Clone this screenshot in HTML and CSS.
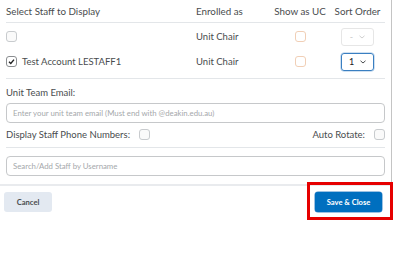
FILE: index.html
```html
<!DOCTYPE html>
<html>
<head>
<meta charset="utf-8">
<link rel="stylesheet" href="styles.css">
</head>
<body>
<div class="panel">
  <div class="grid head">
    <div>Select Staff to Display</div>
    <div>Enrolled as</div>
    <div class="c">Show as UC</div>
    <div class="c">Sort Order</div>
  </div>
  <div class="rows">
    <div class="grid row">
      <div class="name"><span class="cb"></span></div>
      <div>Unit Chair</div>
      <div class="c"><span class="cb uc"></span></div>
      <div class="c"><span class="sel dis">-<svg width="6" height="4" viewBox="0 0 6 4"><path d="M0.5 0.8 L3 3 L5.5 0.8" fill="none" stroke="#c9c9c9" stroke-width="0.9"/></svg></span></div>
    </div>
    <div class="grid row">
      <div class="name"><span class="cb checked"><svg width="9" height="9" viewBox="0 0 9 9"><path d="M2 4.7 L3.8 6.4 L7 2.6" fill="none" stroke="#202122" stroke-width="1.4"/></svg></span>Test Account LESTAFF1</div>
      <div>Unit Chair</div>
      <div class="c"><span class="cb uc"></span></div>
      <div class="c"><span class="sel act">1<svg width="6" height="4" viewBox="0 0 6 4"><path d="M0.5 0.8 L3 3 L5.5 0.8" fill="none" stroke="#494c4e" stroke-width="1"/></svg></span></div>
    </div>
  </div>
  <div class="section">
    <div class="label">Unit Team Email:</div>
    <div class="input">Enter your unit team email (Must end with @deakin.edu.au)</div>
    <div class="opts">
      <span class="opt">Display Staff Phone Numbers:<span class="cb"></span></span>
      <span class="opt">Auto Rotate:<span class="cb"></span></span>
    </div>
  </div>
  <div class="section2">
    <div class="input">Search/Add Staff by Username</div>
  </div>
</div>
<div class="footer">
  <button class="btn cancel">Cancel</button>
  <button class="btn save">Save &amp; Close</button>
</div>
<div class="highlight"></div>
</body>
</html>
```
FILE: styles.css
```css
html, body {
  margin: 0;
  padding: 0;
  background: #fff;
}
body {
  font-family: Lato, "Open Sans", sans-serif;
  font-size: 9.5px;
  color: #494c4e;
  width: 396px;
  height: 257px;
  position: relative;
  overflow: hidden;
}
.panel {
  width: 379px;
  padding: 0 6px;
  border-right: 1px solid #c4c4c4;
  border-bottom: 2px solid #e9ebee;
}
.grid {
  display: grid;
  grid-template-columns: 190px 74px 60px 55px;
  align-items: center;
}
.c {
  display: flex;
  justify-content: center;
}
.head {
  height: 22px;
  font-size: 9.8px;
  border-bottom: 1px solid #e3e6e9;
}
.rows {
  padding: 1px 0 4px;
  border-bottom: 1px solid #e3e6e9;
}
.row {
  height: 25px;
}
.name {
  display: flex;
  align-items: center;
  gap: 5px;
}
.cb {
  display: inline-flex;
  align-items: center;
  justify-content: center;
  box-sizing: border-box;
  width: 11px;
  height: 11px;
  border: 1px solid #c8cbce;
  border-radius: 3px;
  background: #fafafa;
}
.cb.uc {
  border-color: #f1cfb6;
  background: #fff;
}
.cb.checked {
  border-color: #8a8d90;
  background: #fff;
}
.sel {
  display: inline-flex;
  align-items: center;
  justify-content: center;
  gap: 6px;
  box-sizing: border-box;
  width: 33px;
  height: 18px;
  border-radius: 3px;
  font-size: 9px;
}
.sel.dis {
  border: 1px solid #e6e6e6;
  color: #c9c9c9;
}
.sel.act {
  border: 1.5px solid #3a7fc1;
  color: #202122;
  box-shadow: 0 0 0 0.5px #9fc2e4;
}
.section {
  padding: 7px 0 6px;
  border-bottom: 1px solid #e3e6e9;
}
.label {
  line-height: 13px;
  margin-bottom: 4px;
}
.input {
  box-sizing: border-box;
  height: 20px;
  border: 1px solid #c6c8ca;
  border-radius: 4px;
  padding: 0 6px;
  display: flex;
  align-items: center;
  font-size: 7.8px;
  color: #a5a8ab;
}
.opts {
  display: flex;
  justify-content: space-between;
  align-items: center;
  margin-top: 5px;
  height: 13px;
}
.opt {
  display: inline-flex;
  align-items: center;
  gap: 9px;
}
.section2 {
  padding: 8px 0 8px;
}
.footer {
  display: flex;
  justify-content: space-between;
  padding: 6px 14px 0 4px;
}
.btn {
  font-family: Lato, "Open Sans", sans-serif;
  font-weight: bold;
  font-size: 7.6px;
  height: 20px;
  border: none;
  border-radius: 3px;
  padding: 0;
}
.cancel {
  width: 48px;
  background: #e3e9f1;
  color: #494c4e;
}
.save {
  width: 67px;
  background: #006fbf;
  color: #fff;
  box-shadow: 0 0 0 0.5px #3a86c8;
}
.highlight {
  position: absolute;
  left: 307px;
  top: 182px;
  width: 80px;
  height: 32px;
  border: 3px solid #e60000;
}
```
